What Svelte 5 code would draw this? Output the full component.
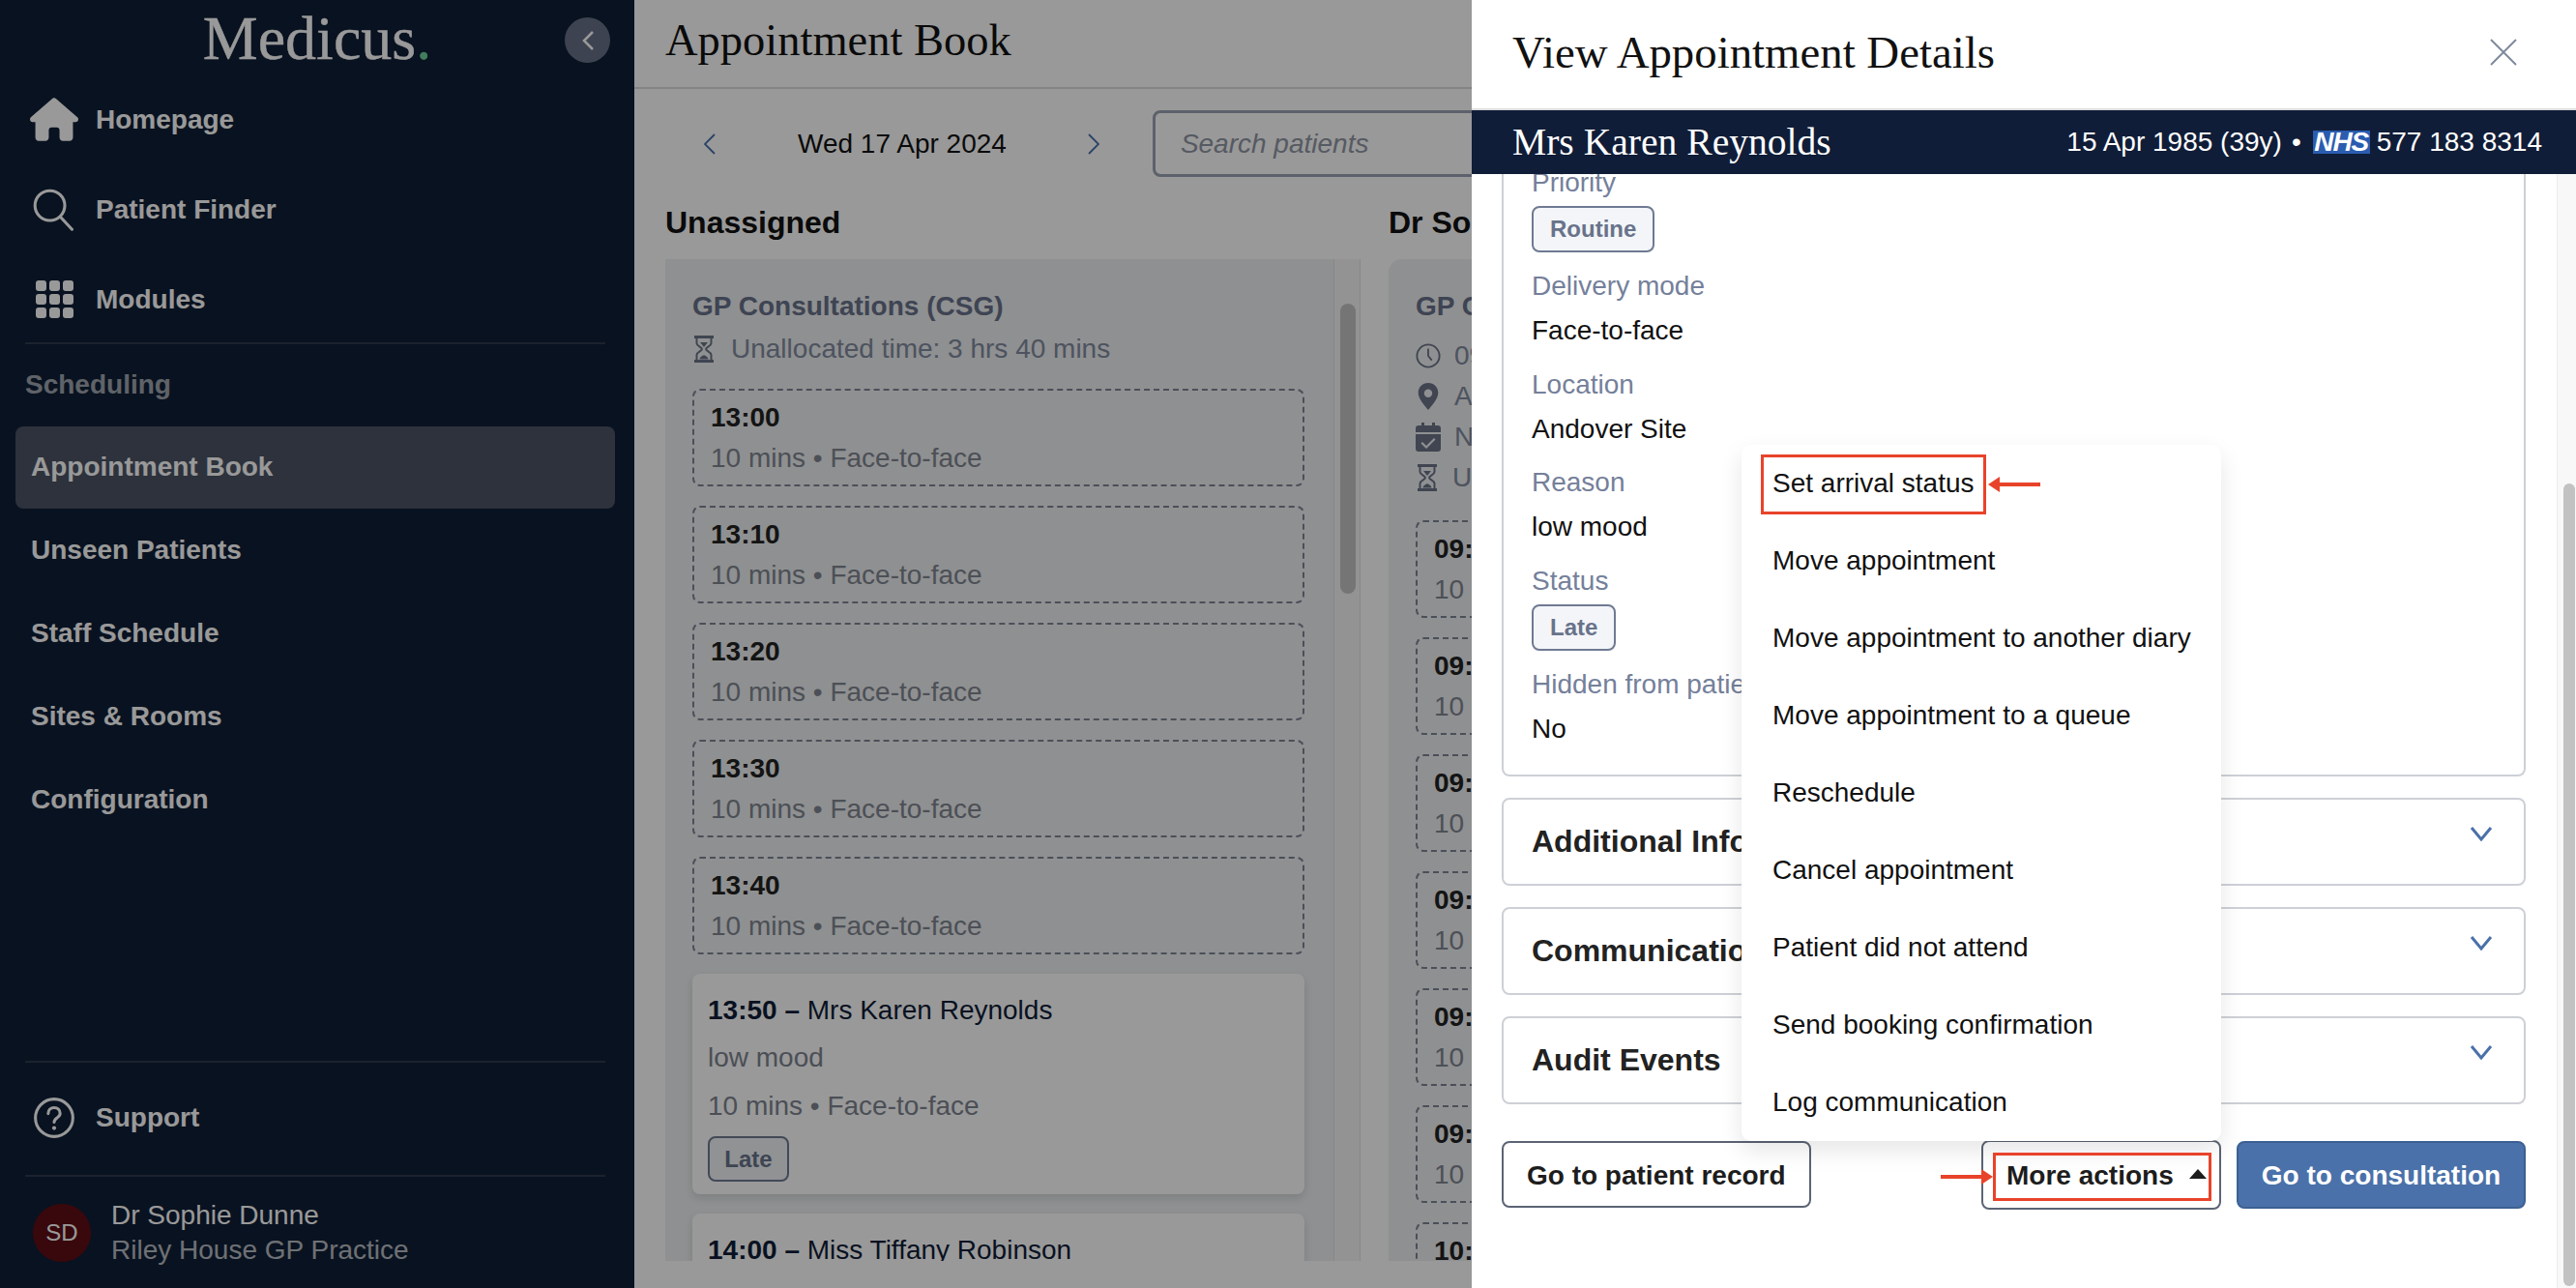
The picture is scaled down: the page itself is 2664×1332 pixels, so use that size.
<script>
  const homePath = 'M575.8 255.5c0 18-15 32.1-32 32.1h-32l.7 160.2c0 2.7-.2 5.4-.5 8.1V472c0 22.1-17.9 40-40 40H456c-1.1 0-2.2 0-3.3-.1c-1.4 .1-2.8 .1-4.2 .1H416 392c-22.1 0-40-17.9-40-40V448 384c0-17.7-14.3-32-32-32H256c-17.7 0-32 14.3-32 32v64 24c0 22.1-17.9 40-40 40H160 128.1c-1.5 0-3-.1-4.5-.2c-1.2 .1-2.4 .2-3.6 .2H104c-22.1 0-40-17.9-40-40V360c0-.9 0-1.9 .1-2.8V287.6H32c-18 0-32-14-32-32.1c0-9 3-17 10-24L266.4 8c7-7 15-8 22-8s15 2 21 7L564.8 231.5c8 7 12 15 11 24z';

  const schedulingLinks = ['Appointment Book', 'Unseen Patients', 'Staff Schedule', 'Sites & Rooms', 'Configuration'];
  const gridDots = [0, 1, 2, 3, 4, 5, 6, 7, 8];
  const freeSlots = ['13:00', '13:10', '13:20', '13:30', '13:40'];
  const doctorSlots = ['09:00', '09:10', '09:20', '09:30', '09:40', '09:50', '10:00'];
  const menuItems = [
    'Set arrival status',
    'Move appointment',
    'Move appointment to another diary',
    'Move appointment to a queue',
    'Reschedule',
    'Cancel appointment',
    'Patient did not attend',
    'Send booking confirmation',
    'Log communication'
  ];
  const sections = ['Additional Information', 'Communications', 'Audit Events'];
</script>

{#snippet hourglass()}
  <svg class="hourglass" viewBox="0 0 24 28" fill="none" stroke="currentColor" stroke-width="2">
    <path d="M2 1.500h20M2 26.500h20" stroke-width="3" />
    <path d="M4.500 3v5c0 3 5.500 4 5.500 6s-5.500 3-5.500 6v5M19.500 3v5c0 3-5.500 4-5.500 6s5.500 3 5.500 6v5" />
    <path d="M8 7h8l-4 5zM7.500 24.500c0-2.500 3-3.500 4.500-4.500 1.500 1 4.500 2 4.500 4.500z" fill="currentColor" stroke="none" />
  </svg>
{/snippet}

<div class="page">
  <aside class="sidebar">
    <div class="brand">
      <span class="logo">Medicus<span class="logo-dot">.</span></span>
      <button class="collapse" aria-label="Collapse">
        <svg width="14" height="22" viewBox="0 0 14 22" fill="none" stroke="currentColor" stroke-width="2.500"><path d="M12 2 3 11l9 9" /></svg>
      </button>
    </div>

    <div class="nav-top">
      <svg class="home" viewBox="0 0 576 512" fill="currentColor"><path d={homePath} /></svg>
      <span>Homepage</span>
    </div>
    <div class="nav-top">
      <svg class="nav-icon" viewBox="0 0 50 50" fill="none" stroke="currentColor" stroke-width="3.500">
        <circle cx="20" cy="20" r="17.500" />
        <path d="m32 33 14 15" stroke-linecap="round" />
      </svg>
      <span>Patient Finder</span>
    </div>
    <div class="nav-top">
      <div class="grid-icon">
        {#each gridDots as dot (dot)}
          <i></i>
        {/each}
      </div>
      <span>Modules</span>
    </div>

    <div class="rule rule-tight"></div>
    <div class="nav-title">Scheduling</div>
    <nav class="nav-sub">
      {#each schedulingLinks as link, i}
        <div class="nav-link" class:active={i === 0}>{link}</div>
      {/each}
    </nav>

    <div class="sidebar-foot">
      <div class="rule"></div>
      <div class="support">
        <svg class="nav-icon" viewBox="0 0 50 50" fill="none" stroke="currentColor" stroke-width="3.500">
          <circle cx="25" cy="25" r="22" />
          <path d="M18 20c0-4 3-7 7-7s7 3 7 7c0 5-7 5-7 10" stroke-linecap="round" />
          <circle cx="25" cy="37" r="2.400" fill="currentColor" stroke="none" />
        </svg>
        <span>Support</span>
      </div>
      <div class="rule"></div>
      <div class="profile">
        <div class="avatar">SD</div>
        <div>
          <div class="profile-name">Dr Sophie Dunne</div>
          <div class="profile-org">Riley House GP Practice</div>
        </div>
      </div>
    </div>
  </aside>

  <main class="main">
    <header class="topbar"><h1>Appointment Book</h1></header>

    <div class="toolbar">
      <svg class="pager" viewBox="0 0 14 24" fill="none" stroke="currentColor" stroke-width="1.800"><path d="M12 2 2 12l10 10" /></svg>
      <span class="date">Wed 17 Apr 2024</span>
      <svg class="pager" viewBox="0 0 14 24" fill="none" stroke="currentColor" stroke-width="1.800"><path d="m2 2 10 10L2 22" /></svg>
      <div class="search">Search patients</div>
    </div>

    <div class="columns">
      <section class="column">
        <h2>Unassigned</h2>
        <div class="panel-wrap">
          <div class="panel">
            <h3>GP Consultations (CSG)</h3>
            <div class="meta">
              {@render hourglass()}
              <span>Unallocated time: 3 hrs 40 mins</span>
            </div>
            <div class="slots">
              {#each freeSlots as time}
                <div class="slot">
                  <b>{time}</b>
                  <span>10 mins • Face-to-face</span>
                </div>
              {/each}
              <div class="booking">
                <div class="booking-head"><b>13:50 –</b> Mrs Karen Reynolds</div>
                <div class="booking-line first">low mood</div>
                <div class="booking-line">10 mins • Face-to-face</div>
                <div class="tag tag-card">Late</div>
              </div>
              <div class="booking">
                <div class="booking-head"><b>14:00 –</b> Miss Tiffany Robinson</div>
              </div>
            </div>
          </div>
          <div class="track"><div class="thumb"></div></div>
        </div>
      </section>

      <section class="column">
        <h2>Dr Sophie Dunne</h2>
        <div class="panel-wrap">
          <div class="panel panel-round">
            <h3>GP Consultations (CSG)</h3>
            <div class="meta meta-row">
              <svg class="meta-icon" viewBox="0 0 28 28" fill="none" stroke="currentColor" stroke-width="2"><circle cx="14" cy="14" r="12.500" /><path d="M14 6v8l4 5" /></svg>
              <span>09:00 – 17:00</span>
            </div>
            <div class="meta meta-row">
              <svg class="meta-icon" viewBox="0 0 24 32" fill="currentColor"><path fill-rule="evenodd" d="M12 1C5.500 1 1 6 1 12c0 7 8 15 11 19 3-4 11-12 11-19 0-6-4.500-11-11-11zm0 7a4.500 4.500 0 1 1 0 9 4.500 4.500 0 0 1 0-9z" /></svg>
              <span>Andover Site</span>
            </div>
            <div class="meta meta-row">
              <svg class="meta-icon" viewBox="0 0 26 30" fill="currentColor"><path fill-rule="evenodd" d="M6 0h3v3h8V0h3v3h3a3 3 0 0 1 3 3v4H0V6a3 3 0 0 1 3-3h3zM0 12h26v15a3 3 0 0 1-3 3H3a3 3 0 0 1-3-3zm19 4-8 8-4-4-1.500 1.500L11 27l9.500-9.500z" /></svg>
              <span>No slot type</span>
            </div>
            <div class="meta meta-row">
              {@render hourglass()}
              <span>Unallocated time</span>
            </div>
            <div class="slots">
              {#each doctorSlots as time}
                <div class="slot">
                  <b>{time}</b>
                  <span>10 mins • Face-to-face</span>
                </div>
              {/each}
            </div>
          </div>
        </div>
      </section>
    </div>
  </main>

  <div class="scrim"></div>

  <aside class="drawer">
    <header class="drawer-head">
      <h2>View Appointment Details</h2>
      <svg class="close" viewBox="0 0 28 28" fill="none" stroke="currentColor" stroke-width="2"><path d="m1 1 26 26M27 1 1 27" /></svg>
    </header>

    <div class="patient">
      <span class="patient-name">Mrs Karen Reynolds</span>
      <span class="patient-info">
        <span>15 Apr 1985 (39y)</span>
        <span class="bullet">•</span>
        <span class="nhs">NHS</span>
        <span>577 183 8314</span>
      </span>
    </div>

    <div class="drawer-body">
      <div class="details">
        <div class="label">Priority</div>
        <div class="tag tag-field">Routine</div>
        <div class="label after-tag">Delivery mode</div>
        <div class="value">Face-to-face</div>
        <div class="label">Location</div>
        <div class="value">Andover Site</div>
        <div class="label">Reason</div>
        <div class="value">low mood</div>
        <div class="label">Status</div>
        <div class="tag tag-field">Late</div>
        <div class="label after-tag">Hidden from patient</div>
        <div class="value">No</div>
      </div>

      {#each sections as section}
        <div class="accordion">
          <span>{section}</span>
          <svg viewBox="0 0 24 16" fill="none" stroke="currentColor" stroke-width="3"><path d="m2 2 10 12L22 2" /></svg>
        </div>
      {/each}

      <div class="actions">
        <button class="btn">Go to patient record</button>
        <div class="actions-right">
          <button class="btn btn-more">More actions <i class="caret"></i></button>
          <button class="btn btn-primary">Go to consultation</button>
        </div>
      </div>

      <div class="drawer-track"><div class="drawer-thumb"></div></div>
    </div>

    <div class="menu">
      {#each menuItems as item}
        <div class="menu-item">{item}</div>
      {/each}
    </div>

    <!-- red callouts drawn on top of the screenshot -->
    <div class="callout callout-item"></div>
    <div class="callout callout-btn"></div>
    <svg class="arrow arrow-item" viewBox="0 0 54 16" fill="#e8432a"><path d="M0 8 12 0v6h42v4H12v6z" /></svg>
    <svg class="arrow arrow-btn" viewBox="0 0 54 16" fill="#e8432a"><path d="M54 8 42 0v6H0v4h42v6z" /></svg>
  </aside>
</div>

<style>
  :global(body) {
    margin: 0;
    background: #fff;
  }

  .page {
    position: relative;
    display: flex;
    width: 2664px;
    height: 1332px;
    overflow: hidden;
    font-family: "Liberation Sans", Arial, sans-serif;
    font-size: 28px;
    line-height: 36px;
    color: #111;
  }

  h1, h2, h3 {
    margin: 0;
  }

  /* sidebar */
  .sidebar {
    display: flex;
    flex-direction: column;
    flex: 0 0 656px;
    background: #0f1e36;
    color: #fff;
  }

  .brand {
    position: relative;
    display: flex;
    justify-content: center;
    height: 77px;
    padding-right: 20px;
  }

  .logo {
    font-family: "Liberation Serif", serif;
    font-size: 64px;
    line-height: 80px;
    margin-left: 20px;
    -webkit-text-stroke: 0.4px currentColor;
  }

  .logo-dot {
    color: #6fd39a;
  }

  .collapse {
    position: absolute;
    left: 584px;
    top: 18px;
    display: flex;
    align-items: center;
    justify-content: center;
    width: 47px;
    height: 47px;
    padding: 0;
    border: 0;
    border-radius: 50%;
    background: #667185;
    color: #fff;
  }

  .nav-top, .support {
    display: flex;
    align-items: center;
    height: 93px;
    padding-left: 31px;
    font-weight: 700;
  }

  .nav-top > span, .support > span {
    margin-left: 18px;
  }

  .home {
    width: 50px;
    height: 45px;
  }

  .nav-icon {
    width: 44px;
    height: 44px;
    margin-left: 3px;
    margin-right: 3px;
  }

  .grid-icon {
    display: grid;
    grid-template-columns: repeat(3, 11px);
    grid-auto-rows: 11px;
    gap: 3px;
    margin: 0 5px 0 6px;
  }

  .grid-icon i {
    background: #fff;
    border-radius: 3px;
  }

  .rule {
    height: 2px;
    margin: 0 30px 0 26px;
    background: #2d3a4e;
  }

  .rule-tight {
    margin-top: -2px;
  }

  .nav-title {
    margin: 24px 0 25px 26px;
    font-weight: 700;
    opacity: 0.6;
  }

  .nav-sub {
    display: flex;
    flex-direction: column;
    gap: 1px;
    padding: 0 20px 0 16px;
  }

  .nav-link {
    height: 85px;
    padding-left: 16px;
    line-height: 84px;
    font-weight: 700;
    border-radius: 8px;
  }

  .nav-link.active {
    background: #4b5465;
  }

  .sidebar-foot {
    margin-top: auto;
  }

  .support {
    height: 114px;
    padding-bottom: 2px;
    box-sizing: content-box;
  }

  .profile {
    display: flex;
    align-items: center;
    gap: 22px;
    height: 115px;
    padding-left: 34px;
  }

  .profile-name {
    margin-left: -1px;
  }

  .profile-org {
    margin-left: -1px;
    opacity: 0.7;
  }

  .avatar {
    display: flex;
    align-items: center;
    justify-content: center;
    width: 60px;
    height: 60px;
    border-radius: 50%;
    background: #5e0e14;
    font-size: 24px;
  }

  /* main column */
  .main {
    flex: 1;
    min-width: 0;
    background: #fff;
  }

  .topbar {
    display: flex;
    align-items: center;
    height: 90px;
    padding: 0 32px 7px;
    box-sizing: border-box;
  }

  .topbar h1 {
    font-family: "Liberation Serif", serif;
    font-size: 46.500px;
    font-weight: 400;
    line-height: 54px;
  }

  .toolbar {
    position: relative;
    display: flex;
    align-items: center;
    height: 69px;
    margin-top: 24px;
  }

  .toolbar::before {
    content: "";
    position: absolute;
    left: 0;
    right: 0;
    top: -24px;
    height: 2px;
    background: #dcdcdc;
  }

  .pager {
    flex: none;
    width: 14px;
    height: 24px;
    color: #4a71a9;
  }

  .pager:first-child {
    margin-left: 71px;
  }

  .date {
    margin: 0 83px 0 84px;
    white-space: nowrap;
  }

  .search {
    flex: none;
    width: 700px;
    height: 69px;
    margin-left: 54px;
    padding-left: 26px;
    box-sizing: border-box;
    border: 3px solid #9aa2b2;
    border-radius: 8px;
    font-style: italic;
    line-height: 63px;
    color: #8f96a3;
    white-space: nowrap;
  }

  .columns {
    display: flex;
    gap: 20px;
    padding-left: 32px;
  }

  .column {
    flex: 0 0 728px;
  }

  .column h2 {
    margin-top: 27px;
    height: 40px;
    font-size: 32px;
    line-height: 40px;
    font-weight: 700;
    white-space: nowrap;
  }

  .panel-wrap {
    display: flex;
    height: 1036px;
    margin-top: 18px;
    overflow: hidden;
  }

  .panel {
    flex: 1;
    padding: 31px 30px 0 28px;
    background: #eef0f2;
    overflow: hidden;
  }

  .panel-round {
    border-top-left-radius: 14px;
  }

  .panel h3 {
    font-size: 28px;
    line-height: 36px;
    font-weight: 700;
    color: #68728a;
    white-space: nowrap;
  }

  .meta {
    display: flex;
    align-items: center;
    gap: 16px;
    margin-top: 8px;
    color: #808a9f;
    white-space: nowrap;
  }

  .meta-row {
    height: 42px;
    margin-top: 0;
    gap: 14px;
  }

  .meta-row:first-of-type {
    margin-top: 12px;
  }

  .meta-icon {
    flex: none;
    width: 26px;
    height: 30px;
    color: #6b7488;
  }

  .hourglass {
    flex: none;
    width: 24px;
    height: 28px;
    color: #6b7488;
  }

  .slots {
    display: flex;
    flex-direction: column;
    gap: 20px;
    margin-top: 23px;
  }

  .slot {
    display: flex;
    flex-direction: column;
    gap: 10px;
    flex: none;
    height: 101px;
    padding: 12px 17px;
    box-sizing: border-box;
    border: 2px dashed #7d8494;
    border-radius: 8px;
    line-height: 32px;
    white-space: nowrap;
  }

  .slot b {
    color: #222;
  }

  .slot span {
    color: #7f8590;
  }

  .booking {
    flex: none;
    padding: 20px 16px 13px;
    background: #fff;
    border-radius: 8px;
    box-shadow: 0 4px 10px rgba(0, 0, 0, 0.12);
  }

  .booking-head {
    color: #101d38;
  }

  .booking-line {
    margin-top: 14px;
    color: #7d848f;
  }

  .booking-line.first {
    margin-top: 13px;
  }

  .tag {
    display: inline-flex;
    align-items: center;
    height: 48px;
    padding: 0 17px;
    box-sizing: border-box;
    background: #f3f5f8;
    border: 2px solid #6f7a92;
    border-radius: 8px;
    font-size: 24px;
    font-weight: 700;
    color: #68738a;
  }

  .tag-card {
    display: flex;
    width: 84px;
    height: 47px;
    margin-top: 13px;
    padding: 0;
    justify-content: center;
    background: #f1f3f7;
  }

  .tag-field {
    display: flex;
    width: fit-content;
    margin-top: 6px;
  }

  /* drawer */
  .scrim {
    position: absolute;
    inset: 0;
    background: rgba(0, 0, 0, 0.4);
  }

  .drawer {
    position: absolute;
    top: 0;
    right: 0;
    bottom: 0;
    display: flex;
    flex-direction: column;
    width: 1142px;
    background: #fff;
  }

  .drawer-head {
    display: flex;
    align-items: center;
    justify-content: space-between;
    flex: none;
    height: 114px;
    padding: 0 61px 4px 42px;
    box-sizing: border-box;
    border-bottom: 2px solid #dedede;
  }

  .drawer-head h2 {
    font-family: "Liberation Serif", serif;
    font-size: 46.800px;
    font-weight: 400;
    line-height: 54px;
  }

  .close {
    width: 28px;
    height: 28px;
    color: #7f8a9c;
  }

  .patient {
    display: flex;
    align-items: center;
    justify-content: space-between;
    flex: none;
    height: 66px;
    padding: 0 35px 0 42px;
    background: #101d38;
    color: #fff;
  }

  .patient-name {
    font-family: "Liberation Serif", serif;
    font-size: 39.600px;
  }

  .patient-info {
    display: flex;
    align-items: center;
    gap: 7px;
  }

  .bullet {
    margin: 0 5px 0 3px;
  }

  .nhs {
    display: inline-block;
    width: 59px;
    height: 24px;
    background: #2a5cb0;
    font-size: 28px;
    font-weight: 700;
    font-style: italic;
    line-height: 24px;
    letter-spacing: -1px;
    text-align: center;
    overflow: hidden;
  }

  .drawer-body {
    position: relative;
    flex: 1;
    min-height: 0;
    padding: 0 52px 0 31px;
    overflow: hidden;
  }

  .details {
    margin-top: -40px;
    padding: 31px 0 29px 29px;
    border: 2px solid #cdd0d6;
    border-radius: 8px;
    border-top-width: 0;
  }

  .label {
    margin-top: 19.500px;
    color: #75809a;
    white-space: nowrap;
  }

  .label:first-child {
    margin-top: 0;
  }

  .label.after-tag {
    margin-top: 17px;
  }

  .value {
    margin-top: 10px;
    color: #111;
  }

  .accordion {
    display: flex;
    justify-content: space-between;
    height: 91px;
    margin-top: 22px;
    padding: 0 32px 0 29px;
    box-sizing: border-box;
    border: 2px solid #cdd0d6;
    border-radius: 8px;
    font-size: 32px;
    font-weight: 700;
    line-height: 87px;
    color: #222;
  }

  .accordion svg {
    width: 24px;
    height: 16px;
    margin-top: 27px;
    color: #4a71a9;
  }

  .actions {
    display: flex;
    align-items: center;
    justify-content: space-between;
    margin-top: 37px;
  }

  .actions-right {
    display: flex;
    align-items: center;
    gap: 16px;
  }

  .btn {
    height: 69px;
    padding: 2px 24px 0;
    background: #fff;
    border: 2px solid #5c6475;
    border-radius: 8px;
    font: 700 28px/36px "Liberation Sans", Arial, sans-serif;
    color: #1d1d1d;
    white-space: nowrap;
  }

  .btn-more {
    display: flex;
    align-items: center;
    width: 248px;
    height: 72px;
    padding-left: 24px;
    box-sizing: border-box;
  }

  .caret {
    width: 0;
    height: 0;
    margin-left: 16px;
    margin-bottom: 4px;
    border-left: 9px solid transparent;
    border-right: 9px solid transparent;
    border-bottom: 10px solid #1d1d1d;
  }

  .btn-primary {
    width: 299px;
    height: 70px;
    padding: 2px 0 0;
    background: #4a71a9;
    border-color: #3c6094;
    color: #fff;
  }

  .drawer-track {
    position: absolute;
    top: 0;
    right: 0;
    bottom: 0;
    width: 19px;
    background: #f8f8f8;
    border-left: 1px solid #ececec;
  }

  .drawer-thumb {
    width: 12px;
    height: 830px;
    margin: 320px 0 0 6px;
    background: #c2c2c2;
    border-radius: 6px;
  }

  .menu {
    position: absolute;
    left: 279px;
    top: 460px;
    width: 496px;
    height: 720px;
    background: #fff;
    border-radius: 10px;
    box-shadow: 0 10px 24px rgba(0, 0, 0, 0.1);
  }

  .menu-item {
    height: 80px;
    padding-left: 32px;
    line-height: 80px;
    white-space: nowrap;
  }

  .callout {
    position: absolute;
    box-sizing: border-box;
    border: 3px solid #e8432a;
  }

  .callout-item {
    left: 299px;
    top: 470px;
    width: 233px;
    height: 62px;
  }

  .callout-btn {
    left: 539px;
    top: 1192px;
    width: 226px;
    height: 50px;
  }

  .arrow {
    position: absolute;
    width: 54px;
    height: 16px;
  }

  .arrow-item {
    left: 534px;
    top: 493px;
  }

  .arrow-btn {
    left: 485px;
    top: 1209px;
  }

  .track {
    flex: 0 0 28px;
    box-sizing: border-box;
    margin-right: 9px;
    background: #f5f5f5;
    border-left: 1px solid #e2e2e2;
    border-right: 1px solid #e2e2e2;
  }

  .thumb {
    width: 16px;
    height: 300px;
    margin: 46px 0 0 6px;
    background: #c4c4c4;
    border-radius: 8px;
  }
</style>
